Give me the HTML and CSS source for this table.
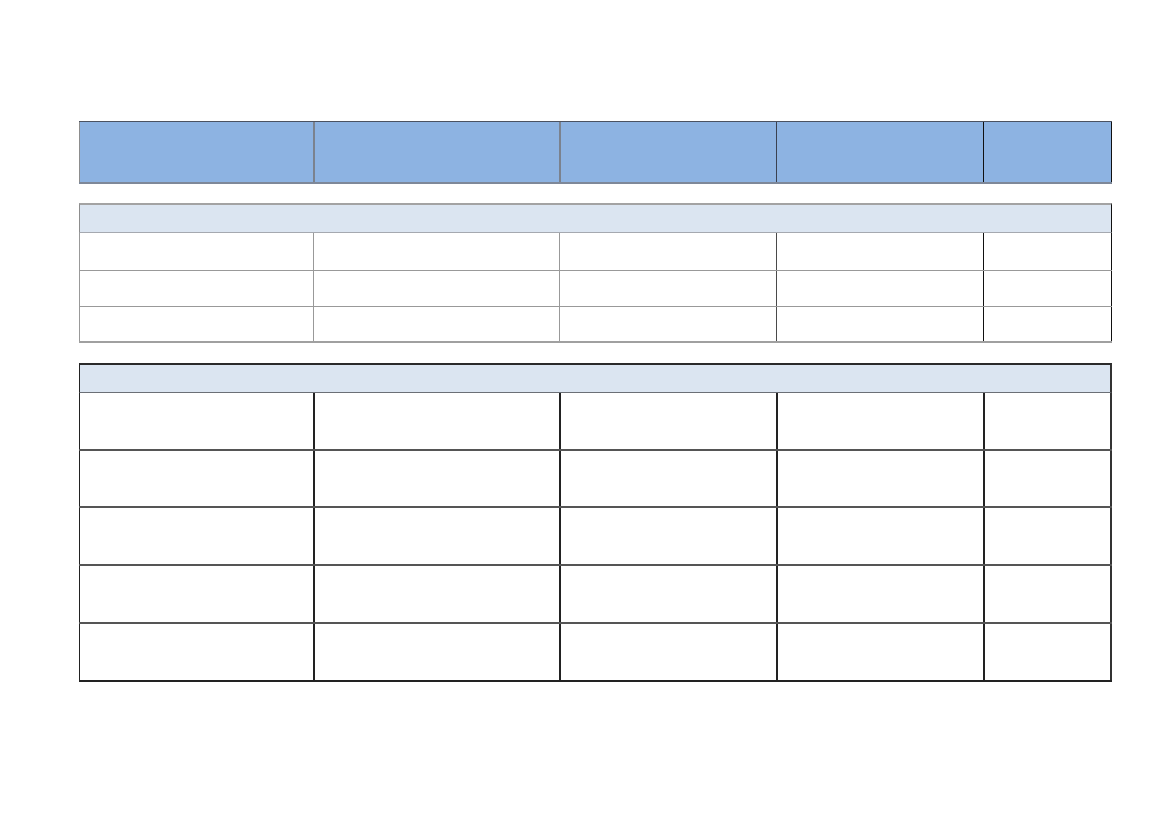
FILE: index.html
```html
<!DOCTYPE html>
<html>
<head>
<meta charset="utf-8">
<link rel="stylesheet" href="styles.css">
</head>
<body>
<div class="page">
  <div class="grid head">
    <div class="cell c1"></div><div class="cell c2"></div><div class="cell c3"></div><div class="cell c4"></div><div class="cell c5"></div>
  </div>

  <div class="block b1">
    <div class="band"></div>
    <div class="grid rows">
      <div class="cell c1"></div><div class="cell c2"></div><div class="cell c3"></div><div class="cell c4"></div><div class="cell c5"></div>
    </div>
    <div class="grid rows r2">
      <div class="cell c1"></div><div class="cell c2"></div><div class="cell c3"></div><div class="cell c4"></div><div class="cell c5"></div>
    </div>
    <div class="grid rows r3 last">
      <div class="cell c1"></div><div class="cell c2"></div><div class="cell c3"></div><div class="cell c4"></div><div class="cell c5"></div>
    </div>
  </div>

  <div class="block b2">
    <div class="band"></div>
    <div class="grid rows"><div class="cell c1"></div><div class="cell c2"></div><div class="cell c3"></div><div class="cell c4"></div><div class="cell c5"></div></div>
    <div class="grid rows short"><div class="cell c1"></div><div class="cell c2"></div><div class="cell c3"></div><div class="cell c4"></div><div class="cell c5"></div></div>
    <div class="grid rows"><div class="cell c1"></div><div class="cell c2"></div><div class="cell c3"></div><div class="cell c4"></div><div class="cell c5"></div></div>
    <div class="grid rows"><div class="cell c1"></div><div class="cell c2"></div><div class="cell c3"></div><div class="cell c4"></div><div class="cell c5"></div></div>
    <div class="grid rows last"><div class="cell c1"></div><div class="cell c2"></div><div class="cell c3"></div><div class="cell c4"></div><div class="cell c5"></div></div>
  </div>
</div>
</body>
</html>
```

FILE: styles.css
```css
html, body {
  margin: 0;
  padding: 0;
  background: #ffffff;
  font-family: "Liberation Sans", Arial, sans-serif;
}

.page {
  padding: 121px 0 0 79px;
  width: 1033px;
  display: flex;
  flex-direction: column;
}

.grid {
  display: grid;
  grid-template-columns: 234px 246px 217px 207px 129px;
}

.cell {
  box-sizing: border-box;
  border-left: 1px solid #8a8a8a;
}

/* Header */
.head {
  height: 63px;
  background: #8db3e2;
  border-top: 1px solid #4b5261;
  border-bottom: 2px solid #7e8899;
  box-sizing: border-box;
}
.head .c1 { border-left: 1px solid #8d8d8d; }
.head .c2 { border-left: 2px solid #7b828e; }
.head .c3 { border-left: 2px solid #7b828e; }
.head .c4 { border-left: 1px solid #3a4150; }
.head .c5 { border-left: 1px solid #111; border-right: 1px solid #111; }

/* Block 1 */
.b1 {
  margin-top: 19px;
}
.b1 .band {
  height: 30px;
  box-sizing: border-box;
  background: #dbe5f1;
  border-top: 2px solid #a3a3a3;
  border-bottom: 1px solid #a5a9b0;
  border-left: 1px solid #8d8d8d;
  border-right: 1px solid #111;
}
.b1 .rows {
  height: 38px;
  box-sizing: border-box;
  border-bottom: 1px solid #999;
}
.b1 .r2 { height: 36px; }
.b1 .rows.last { border-bottom: 2px solid #a0a0a0; height: 36px; }
.b1 .c1 { border-left: 1px solid #999; }
.b1 .c2 { border-left: 1px solid #999; }
.b1 .c3 { border-left: 1px solid #999; }
.b1 .c4 { border-left: 1px solid #4a4a4a; }
.b1 .c5 { border-left: 1px solid #111; border-right: 1px solid #111; }

/* Block 2 */
.b2 {
  margin-top: 20px;
}
.b2 .band {
  height: 30px;
  box-sizing: border-box;
  background: #dbe5f1;
  border-top: 2px solid #2a2a2a;
  border-bottom: 1px solid #6b6f76;
  border-left: 1px solid #222;
  border-right: 2px solid #333;
}
.b2 .rows {
  height: 58px;
  box-sizing: border-box;
  border-bottom: 2px solid #555;
}
.b2 .rows.short { height: 57px; }
.b2 .rows.last { border-bottom: 2px solid #222; }
.b2 .c1 { border-left: 1px solid #222; }
.b2 .c2 { border-left: 2px solid #222; }
.b2 .c3 { border-left: 2px solid #222; }
.b2 .c4 { border-left: 2px solid #222; }
.b2 .c5 { border-left: 2px solid #222; border-right: 2px solid #333; }
```
